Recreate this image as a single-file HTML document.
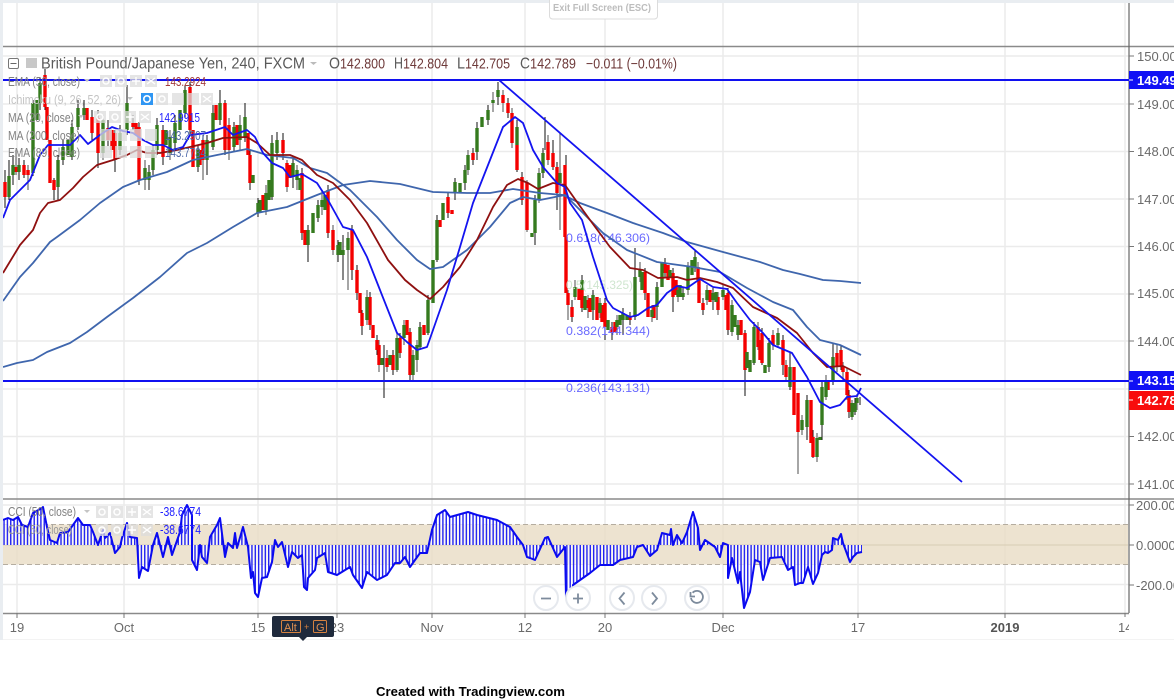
<!DOCTYPE html>
<html><head><meta charset="utf-8"><title>GBP/JPY chart</title>
<style>
html,body{margin:0;padding:0;background:#fff}
svg{display:block;font-family:"Liberation Sans",Arial,sans-serif}
.ax{font-size:13px;fill:#6a6a6a}
.lg{font-size:12.5px;fill:#808080}
.fb{font-size:12px;fill:#6a6aff}
.ti{font-size:15.5px;fill:#5a5a5a}
.ov{font-size:14.5px;fill:#6e3a3a}
.pl{font-size:13px;font-weight:bold;fill:#fff}
</style></head><body>
<svg width="1174" height="700" viewBox="0 0 1174 700" xmlns="http://www.w3.org/2000/svg">
<defs>
<pattern id="st" width="3.35" height="10" patternUnits="userSpaceOnUse"><rect x="0" width="3.35" height="10" fill="#ffffff" fill-opacity=".75"/><rect x="0" width="1.4" height="10" fill="#2222f0"/></pattern>
<clipPath id="cp"><rect x="3" y="46" width="1126" height="594"/></clipPath>
<clipPath id="cr"><rect x="1129" y="0" width="45" height="640"/></clipPath>
</defs>
<rect width="1174" height="700" fill="#fff"/>
<rect x="0" y="0" width="1174" height="3" fill="#e9edf1"/>
<rect x="0" y="0" width="3" height="640" fill="#e9edf1"/>
<!-- grid -->
<path d="M17 3V613M124 3V613M258 3V613M337 3V613M432 3V613M525 3V613M605 3V613M723 3V613M858 3V613M1005 3V613M1125 3V613" stroke="#e6e6e6" stroke-width="1.2" fill="none"/>
<path d="M3 56H1129M3 104H1129M3 151.5H1129M3 199H1129M3 246.5H1129M3 294H1129M3 341H1129M3 389H1129M3 436.5H1129M3 484H1129M3 505H1129M3 584.5H1129" stroke="#ebebeb" stroke-width="1.5" fill="none"/>
<path d="M3 639.5H1174" stroke="#f3f3f3" stroke-width="1"/>
<!-- CCI band -->
<rect x="3" y="524.5" width="1125" height="40" fill="#e8dcc4" fill-opacity=".8"/>
<path d="M3 545H1128" stroke="#d8ccb4" stroke-width="1"/>
<path d="M3 524.5H1128M3 564.5H1128" stroke="#b5ada0" stroke-width="1" stroke-dasharray="5 3" fill="none"/>
<!-- frame -->
<path d="M3 46.5H1174M3 499H1174M3 613.5H1129" stroke="#8a8a8a" stroke-width="1.4" fill="none"/>
<path d="M1129 3V613" stroke="#666" stroke-width="1.2"/>
<path d="M1129 56h5M1129 104h5M1129 151.5h5M1129 199h5M1129 246.5h5M1129 294h5M1129 341h5M1129 436.5h5M1129 484h5M1129 505h5M1129 545h5M1129 585h5M17 613v5M124 613v5M258 613v5M337 613v5M432 613v5M525 613v5M605 613v5M723 613v5M858 613v5M1005 613v5M1125 613v4" stroke="#777" stroke-width="1" fill="none"/>
<!-- exit full screen -->
<rect x="549.5" y="-4" width="108" height="23" rx="3" fill="#fff" stroke="#dcdcdc"/>
<text x="553" y="11" font-size="10" font-weight="bold" fill="#bdbdbd" textLength="98" lengthAdjust="spacingAndGlyphs">Exit Full Screen (ESC)</text>
<!-- wicks -->
<path clip-path="url(#cp)" fill="none" stroke="#111" stroke-width="1" d="M5 170V208M9 160V200M13 155V185M19 158V180M24 160V178M33 100V176M40 78V110M45 69V110M54 178V200M58 155V200M63 140V165M72 120V160M78 100V130M84 100V120M92 110V140M98 110V168M108 120V146M115 130V172M120 125V155M127 85V135M133 115V130M139 122V185M149 165V190M153 145V175M157 118V155M163 125V165M175 115V150M185 85V118M190 82V135M198 145V172M207 135V175M213 105V150M220 90V125M225 100V155M234 122V152M245 103V142M250 150V190M258 198V217M272 135V200M277 132V160M283 133V160M293 158V188M302 168V240M308 225V262M318 200V222M328 185V238M338 240V262M343 235V280M352 225V280M357 265V300M362 310V335M370 292V330M377 335V355M384 345V398M393 350V375M400 333V358M410 328V380M420 322V350M428 295V335M437 215V262M448 192V218M455 178V200M465 165V190M473 148V165M477 122V160M488 105V125M498 82V105M508 98V118M517 120V172M522 172V205M535 195V245M543 148V178M545 117V150M553 140V170M557 162V210M566 155V170M572 300V322M582 275V312M593 290V320M605 298V340M612 322V340M623 308V335M630 312V325M635 248V320M645 268V300M657 282V320M665 258V278M673 268V312M683 288V300M695 250V272M703 298V315M713 288V310M728 288V335M738 320V340M745 330V396M754 322V365M762 328V365M769 338V372M783 335V375M790 352V390M807 395V440M813 430V458M822 382V440M833 343V385M841 345V370M849 390V418M855 398V415M860 397V405"/>
<path clip-path="url(#cp)" fill="none" stroke="#777" stroke-width="1.3" d="M16 150V175M28 165V190M103 115V160M145 160V190M170 130V160M203 135V180M229 118V160M240 115V150M266 185V215M287 160V192M297 165V190M322 190V215M333 225V255M348 232V290M367 290V325M379 340V372M387 350V372M397 332V372M404 320V345M413 350V380M417 340V372M468 150V175M493 92V112M503 90V112M512 108V148M527 180V232M539 168V203M548 135V165M560 133V230M568 290V320M575 280V300M588 295V318M600 298V318M617 315V335M640 262V282M652 305V322M678 285V302M688 262V295M698 262V285M707 285V305M718 292V315M723 285V300M732 300V336M758 322V350M773 330V350M778 328V348M786 360V380M798 393V474M802 415V435M817 433V462M826 375V400M837 345V372M843 362V380M847 368V400M852 400V420M857 394V410"/>
<!-- red candles -->
<path clip-path="url(#cp)" fill="none" stroke="#f40000" stroke-width="3.4" d="M5 182V197M16 167V172M24 165V175M28 170V175M45 75V107M47 107V140M50 140V183M54 180V190M87 108V120M92 117V133M98 118V153M108 128V140M112 130V150M115 133V160M133 123V127M136 123V135M139 127V180M163 130V157M190 87V130M193 130V167M200 150V165M203 140V160M216 105V120M225 103V150M229 125V150M237 125V145M248 133V155M250 155V183M263 195V210M283 140V153M287 163V187M290 165V178M302 173V233M305 230V245M328 190V233M333 230V250M352 230V270M357 270V293M360 293V313M362 313V326M370 297V325M373 325V338M377 340V350M379 345V365M387 358V367M393 355V370M400 338V353M407 320V335M410 332V375M424 325V335M440 220V227M448 197V213M452 210V214M473 153V160M503 95V103M508 103V113M512 113V143M517 145V170M522 177V200M527 183V230M548 142V160M553 153V167M557 167V193M565 165V237M566 237V293M568 293V305M572 307V317M579 288V300M582 290V308M588 300V308M590 298V312M597 297V320M602 305V322M605 303V327M612 327V333M615 322V332M630 317V320M645 272V293M648 293V317M654 305V318M665 263V273M668 265V280M673 273V297M676 280V295M698 267V280M699 280V303M703 303V310M710 290V302M718 297V310M726 295V310M728 293V330M741 320V335M745 333V370M758 327V347M760 340V360M762 333V363M773 335V345M783 340V365M786 365V377M794 367V415M798 393V432M811 400V443M813 437V457M828 380V390M837 353V367M841 350V367M843 367V372M847 372V395M849 395V412"/>
<!-- green candles -->
<path clip-path="url(#cp)" fill="none" stroke="#357a1e" stroke-width="3.4" d="M9 176V197M13 165V175M19 165V172M33 103V173M37 100V120M40 83V103M58 160V187M63 147V160M68 140V155M72 127V157M78 108V127M84 108V115M103 120V153M120 133V150M127 103V130M145 168V180M149 172V180M153 150V170M157 125V150M166 130V145M170 137V153M175 123V143M180 110V130M185 90V113M198 150V167M207 140V160M213 113V147M220 103V120M234 127V147M240 125V140M245 117V137M253 175V183M258 203V213M260 200V212M266 193V210M269 180V200M272 143V197M277 140V153M293 163V177M297 170V180M300 178V190M308 230V245M313 213V233M318 205V218M322 200V207M325 195V210M338 245V255M340 242V255M343 250V255M348 238V250M367 297V320M382 358V365M390 355V365M397 338V370M404 325V338M413 355V375M417 345V360M420 327V347M428 300V333M433 260V303M437 220V260M443 203V220M455 182V193M460 183V193M465 170V183M468 155V170M477 128V152M482 117V127M488 110V120M493 100V103M498 90V97M517 127V145M532 233V237M535 200V233M539 173V200M543 153V173M560 173V183M575 287V297M582 280V290M585 296V310M593 295V310M600 303V313M608 320V330M617 320V327M620 315V325M623 313V320M627 315V320M635 277V317M640 270V277M642 272V290M652 310V317M657 287V307M662 263V287M670 270V277M678 290V297M680 285V297M683 293V297M688 267V290M692 260V275M695 257V267M707 290V300M713 293V300M716 292V302M723 290V297M732 305V332M735 315V327M738 325V335M747 352V368M750 360V372M754 327V363M765 365V373M769 343V367M778 333V345M790 367V387M802 420V430M807 400V427M817 438V457M820 437V440M822 387V425M826 380V397M833 357V380M852 403V417M855 403V412M857 398V403"/>
<!-- fib labels -->
<text x="566" y="242" class="fb" textLength="84" lengthAdjust="spacingAndGlyphs">0.618(146.306)</text>
<text x="566" y="289" class="fb" style="fill:#cfe6cf" textLength="67" lengthAdjust="spacingAndGlyphs">0.5(145.325)</text>
<text x="566" y="335" class="fb" textLength="84" lengthAdjust="spacingAndGlyphs">0.382(144.344)</text>
<text x="566" y="392" class="fb" textLength="84" lengthAdjust="spacingAndGlyphs">0.236(143.131)</text>
<!-- moving averages -->
<g fill="none" stroke-width="1.8" stroke-linejoin="round" clip-path="url(#cp)">
<polyline stroke="#3f66ad" points="3,367 17,363 33,360 47,352 70,343 87,332 107,317 133,298 160,277 187,253 207,243 233,227 257,213 287,207 317,195 343,185 370,181 400,184 433,192 467,193 490,193 513,189 540,193 563,195 580,203 607,213 633,223 663,233 687,242 723,252 760,262 783,270 800,274 823,280 840,281 861,283"/>
<polyline stroke="#3f66ad" points="3,301 20,277 33,263 50,242 57,237 80,220 100,203 123,187 140,180 167,172 193,160 217,155 247,149 267,155 293,158 310,168 327,173 350,190 377,217 397,240 417,260 430,269 443,267 467,250 490,227 510,203 523,197 540,200 565,195 580,210 603,233 627,250 657,262 693,267 720,272 747,288 773,302 793,310 807,327 820,340 840,345 861,355"/>
<polyline stroke="#8f1010" points="3,273 20,245 33,230 40,213 48,203 60,200 73,188 83,177 97,165 113,160 127,155 137,150 147,153 160,153 177,150 190,147 207,143 223,138 247,137 257,143 270,155 290,155 302,160 317,175 333,183 350,200 367,223 388,260 405,280 417,290 430,299 443,287 460,267 477,240 493,207 507,185 518,179 528,183 538,189 553,183 565,185 577,202 590,220 610,247 630,268 643,270 658,278 677,277 687,280 700,278 717,282 733,288 753,307 777,318 797,333 813,353 827,367 843,366 861,375"/>
<polyline stroke="#1414f0" points="3,218 10,200 30,180 40,155 48,145 70,145 80,135 88,144 100,135 112,127 123,131 133,133 143,140 153,145 163,145 173,150 183,147 190,135 207,133 225,127 233,135 247,130 255,137 263,153 272,163 283,168 290,177 302,174 317,183 328,200 343,227 353,230 367,257 380,290 397,333 407,342 417,350 427,347 433,330 447,290 460,247 473,203 490,160 503,127 515,117 523,123 533,150 543,167 557,183 565,187 570,203 582,220 593,257 607,300 613,308 630,317 638,315 648,308 657,305 667,293 677,286 687,288 700,279 713,287 727,289 737,303 750,320 763,333 773,345 792,353 807,377 820,402 830,408 840,405 847,397 857,396 861,388"/>
</g>
<!-- trend and horizontal lines -->
<path d="M499 80L962 482" stroke="#1414f0" stroke-width="1.8" fill="none"/>
<path d="M3 80H1129M3 381H1129" stroke="#1010f0" stroke-width="2" fill="none"/>
<!-- CCI -->
<g clip-path="url(#cp)">
<polygon fill="url(#st)" stroke="none" points="3,545 3,520 8,518 13,520 18,517 22,525 28,527 33,513 42,508 43,507 47,527 50,540 57,543 60,533 68,532 78,518 83,525 90,525 93,532 98,545 103,530 105,538 110,533 115,553 120,547 122,538 127,523 130,537 137,538 139,578 142,567 148,571 153,545 157,533 163,557 168,537 172,555 180,532 182,515 187,505 192,515 192,560 197,570 200,545 202,557 207,563 210,537 217,525 220,518 225,557 228,543 233,548 235,533 237,548 243,527 248,547 251,578 253,572 255,593 258,597 262,578 267,577 272,562 275,540 278,547 282,542 288,567 292,552 298,558 302,555 304,587 307,590 308,578 315,570 317,558 325,553 328,572 337,575 350,567 353,575 362,588 367,572 377,580 387,575 395,563 400,563 405,557 410,567 420,553 427,553 432,530 437,515 445,510 450,517 468,512 477,515 497,520 510,527 517,537 523,545 527,557 530,558 535,560 545,538 548,537 557,557 565,547 566,597 572,595 573,585 590,573 600,565 613,565 620,560 633,557 637,547 643,545 650,556 657,550 662,533 670,535 671,529 673,545 677,535 682,543 687,532 693,512 698,528 700,550 705,540 715,547 720,557 723,543 728,545 728,578 732,558 738,583 740,572 744,608 750,592 755,560 760,562 763,580 770,558 782,557 788,570 793,567 795,585 800,583 803,583 808,567 813,584 818,573 822,555 825,552 828,553 832,550 833,538 838,540 841,534 843,543 850,562 853,557 857,553 862,552 862,545"/>
<polyline fill="none" stroke="#0a0af0" stroke-width="2" stroke-linejoin="round" points="3,520 8,518 13,520 18,517 22,525 28,527 33,513 42,508 43,507 47,527 50,540 57,543 60,533 68,532 78,518 83,525 90,525 93,532 98,545 103,530 105,538 110,533 115,553 120,547 122,538 127,523 130,537 137,538 139,578 142,567 148,571 153,545 157,533 163,557 168,537 172,555 180,532 182,515 187,505 192,515 192,560 197,570 200,545 202,557 207,563 210,537 217,525 220,518 225,557 228,543 233,548 235,533 237,548 243,527 248,547 251,578 253,572 255,593 258,597 262,578 267,577 272,562 275,540 278,547 282,542 288,567 292,552 298,558 302,555 304,587 307,590 308,578 315,570 317,558 325,553 328,572 337,575 350,567 353,575 362,588 367,572 377,580 387,575 395,563 400,563 405,557 410,567 420,553 427,553 432,530 437,515 445,510 450,517 468,512 477,515 497,520 510,527 517,537 523,545 527,557 530,558 535,560 545,538 548,537 557,557 565,547 566,597 572,595 573,585 590,573 600,565 613,565 620,560 633,557 637,547 643,545 650,556 657,550 662,533 670,535 671,529 673,545 677,535 682,543 687,532 693,512 698,528 700,550 705,540 715,547 720,557 723,543 728,545 728,578 732,558 738,583 740,572 744,608 750,592 755,560 760,562 763,580 770,558 782,557 788,570 793,567 795,585 800,583 803,583 808,567 813,584 818,573 822,555 825,552 828,553 832,550 833,538 838,540 841,534 843,543 850,562 853,557 857,553 862,552"/>
</g>
<!-- title row -->
<rect x="8.5" y="58.5" width="10" height="10" rx="1.5" fill="#fff" stroke="#777"/>
<path d="M10.5 63.5h6" stroke="#666"/>
<path d="M26 58h11v10H26zM26 58l4 5-4 5z" fill="#c8c8c8"/>
<text x="41" y="68.5" class="ti" textLength="264" lengthAdjust="spacingAndGlyphs">British Pound/Japanese Yen, 240, FXCM</text>
<path d="M310 62h7l-3.5 3z" fill="#bbb"/>
<text x="329" y="68.5" class="ti" textLength="11" lengthAdjust="spacingAndGlyphs">O</text>
<text x="340" y="68.5" class="ov" textLength="45" lengthAdjust="spacingAndGlyphs">142.800</text>
<text x="394" y="68.5" class="ti" textLength="9" lengthAdjust="spacingAndGlyphs">H</text>
<text x="403" y="68.5" class="ov" textLength="45" lengthAdjust="spacingAndGlyphs">142.804</text>
<text x="457" y="68.5" class="ti" textLength="8" lengthAdjust="spacingAndGlyphs">L</text>
<text x="465" y="68.5" class="ov" textLength="45" lengthAdjust="spacingAndGlyphs">142.705</text>
<text x="520" y="68.5" class="ti" textLength="10" lengthAdjust="spacingAndGlyphs">C</text>
<text x="530" y="68.5" class="ov" textLength="46" lengthAdjust="spacingAndGlyphs">142.789</text>
<text x="586" y="68.5" class="ov" textLength="91" lengthAdjust="spacingAndGlyphs">−0.011 (−0.01%)</text>
<!-- legends -->
<g>
<text x="8" y="86" class="lg" textLength="72" lengthAdjust="spacingAndGlyphs">EMA (50, close)</text>
<text x="8" y="104" class="lg" style="fill:#c4c4c4" textLength="113" lengthAdjust="spacingAndGlyphs">Ichimoku (9, 26, 52, 26)</text>
<text x="8" y="122" class="lg" textLength="66" lengthAdjust="spacingAndGlyphs">MA (20, close)</text>
<text x="8" y="140" class="lg" textLength="72" lengthAdjust="spacingAndGlyphs">MA (200, close)</text>
<text x="8" y="157" class="lg" textLength="72" lengthAdjust="spacingAndGlyphs">EMA (89, close)</text>
<text x="165" y="86" class="lg" style="fill:#a33c3c" textLength="41" lengthAdjust="spacingAndGlyphs">143.2924</text>
<text x="159" y="122" class="lg" style="fill:#2020ff" textLength="41" lengthAdjust="spacingAndGlyphs">142.9915</text>
<text x="165" y="140" class="lg" style="fill:#4d68a8" textLength="41" lengthAdjust="spacingAndGlyphs">143.2907</text>
<text x="165" y="157" class="lg" style="fill:#4d68a8" textLength="41" lengthAdjust="spacingAndGlyphs">143.7734</text>
<text x="8" y="516" class="lg" textLength="68" lengthAdjust="spacingAndGlyphs">CCI (50, close)</text>
<text x="8" y="534" class="lg" style="fill:#999" textLength="64" lengthAdjust="spacingAndGlyphs">CCI (50, close)</text>
<text x="160" y="516" class="lg" style="fill:#2020ff" textLength="41" lengthAdjust="spacingAndGlyphs">-38.6774</text>
<text x="160" y="534" class="lg" style="fill:#2020ff" textLength="41" lengthAdjust="spacingAndGlyphs">-38.6774</text>
</g>
<!-- legend icons -->
<g fill="#dcdcdc" fill-opacity=".75">
<rect x="100" y="75" width="12" height="12"/><rect x="115" y="75" width="12" height="12"/><rect x="130" y="75" width="12" height="12"/><rect x="145" y="75" width="12" height="12"/>
<rect x="156" y="93" width="12" height="12"/><rect x="172" y="93" width="12" height="12"/><rect x="187" y="93" width="12" height="12"/><rect x="201" y="93" width="12" height="12"/>
<rect x="94" y="111" width="12" height="12"/><rect x="109" y="111" width="12" height="12"/><rect x="124" y="111" width="12" height="12"/><rect x="139" y="111" width="12" height="12"/>
<rect x="100" y="129" width="12" height="12"/><rect x="115" y="129" width="12" height="12"/><rect x="130" y="129" width="12" height="12"/><rect x="145" y="129" width="12" height="12"/>
<rect x="100" y="146" width="12" height="12"/><rect x="115" y="146" width="12" height="12"/><rect x="130" y="146" width="12" height="12"/><rect x="145" y="146" width="12" height="12"/>
<rect x="96" y="506" width="12" height="12"/><rect x="111" y="506" width="12" height="12"/><rect x="126" y="506" width="12" height="12"/><rect x="141" y="506" width="12" height="12"/>
<rect x="96" y="524" width="12" height="12"/><rect x="111" y="524" width="12" height="12"/><rect x="126" y="524" width="12" height="12"/><rect x="141" y="524" width="12" height="12"/>
</g>
<path fill="none" stroke="#fff" stroke-width="1.4" d="M147 78l8 6M155 78l-8 6M132 81h8M136 77v8M203 96l8 6M211 96l-8 6M141 114l8 6M149 114l-8 6M126 117h8M130 113v8M143 509l8 6M151 509l-8 6M128 512h8M132 508v8M143 527l8 6M151 527l-8 6M128 530h8M132 526v8"/>
<g fill="none" stroke="#fff" stroke-width="1.5">
<circle cx="106" cy="81" r="3"/><circle cx="121" cy="81" r="3"/><circle cx="162" cy="99" r="3"/><circle cx="100" cy="117" r="3"/><circle cx="115" cy="117" r="3"/><circle cx="102" cy="512" r="3"/><circle cx="117" cy="512" r="3"/><circle cx="102" cy="530" r="3"/><circle cx="117" cy="530" r="3"/>
</g>
<rect x="141" y="93" width="12" height="12" fill="#2f96f3"/>
<circle cx="147" cy="99" r="3.2" fill="none" stroke="#fff" stroke-width="1.6"/>
<path d="M84 79h6l-3 3zM127 97h6l-3 3zM78 115h6l-3 3zM84 510h6l-3 3z" fill="#c4c4c4"/>
<!-- right axis -->
<g clip-path="url(#cr)">
<text x="1137" y="61" class="ax">150.00</text>
<text x="1137" y="109" class="ax">149.00</text>
<text x="1137" y="156" class="ax">148.00</text>
<text x="1137" y="204" class="ax">147.00</text>
<text x="1137" y="251" class="ax">146.00</text>
<text x="1137" y="298" class="ax">145.00</text>
<text x="1137" y="346" class="ax">144.00</text>
<text x="1137" y="441" class="ax">142.00</text>
<text x="1137" y="489" class="ax">141.00</text>
<text x="1136" y="510" class="ax">200.0000</text>
<text x="1136" y="550" class="ax">0.0000</text>
<text x="1136" y="590" class="ax">-200.0000</text>
<rect x="1129" y="71" width="45" height="18" fill="#1010f5"/>
<rect x="1129" y="371" width="45" height="19" fill="#1010f5"/>
<rect x="1129" y="391" width="45" height="19" fill="#f80c0c"/>
<path d="M1129 80h4M1129 381h4M1129 400h4" stroke="#fff"/>
<text x="1137" y="85" class="pl">149.494</text>
<text x="1137" y="385" class="pl">143.158</text>
<text x="1137" y="405" class="pl">142.789</text>
</g>
<!-- time axis -->
<g class="ax" text-anchor="middle">
<text x="17" y="632" class="ax">19</text>
<text x="124" y="632" class="ax">Oct</text>
<text x="258" y="632" class="ax">15</text>
<text x="337" y="632" class="ax">23</text>
<text x="432" y="632" class="ax">Nov</text>
<text x="525" y="632" class="ax">12</text>
<text x="605" y="632" class="ax">20</text>
<text x="723" y="632" class="ax">Dec</text>
<text x="858" y="632" class="ax">17</text>
<text x="1005" y="632" class="ax" style="font-weight:bold;fill:#555">2019</text>
</g>
<svg x="1118" y="618" width="11" height="20"><text x="0" y="14" class="ax">14</text></svg>
<!-- zoom controls -->
<g fill="#fff" stroke="#e6e9ee" stroke-width="2">
<circle cx="546" cy="598" r="12"/><circle cx="578" cy="598" r="12"/><circle cx="622" cy="598" r="12"/><circle cx="654" cy="598" r="12"/><circle cx="697" cy="598" r="12"/>
</g>
<path fill="none" stroke="#7d8b9c" stroke-width="1.8" d="M541 598.5h10M573 598.5h10M578 593.5v10M624.5 592.5l-5 6 5 6M652 592.5l5 6-5 6M692.6 592.7a6 6 0 1 1-1.6 5.3M690.5 592v4.5h4.5"/>
<!-- alt g tooltip -->
<rect x="272" y="616" width="62" height="21" rx="2" fill="#1f2a3c"/>
<path d="M299 637h8l-4 4z" fill="#1f2a3c"/>
<rect x="281.5" y="620.5" width="19" height="12" rx="1" fill="none" stroke="#d5813f"/>
<rect x="313.5" y="620.5" width="13" height="12" rx="1" fill="none" stroke="#d5813f"/>
<text x="284" y="631" font-size="11" fill="#e09050">Alt</text>
<text x="304" y="630" font-size="9" fill="#d5813f">+</text>
<text x="316" y="631" font-size="11" fill="#e09050">G</text>
<!-- footer -->
<text x="376" y="696" font-size="13" font-weight="bold" fill="#000" textLength="189" lengthAdjust="spacingAndGlyphs">Created with Tradingview.com</text>
</svg>
</body></html>
